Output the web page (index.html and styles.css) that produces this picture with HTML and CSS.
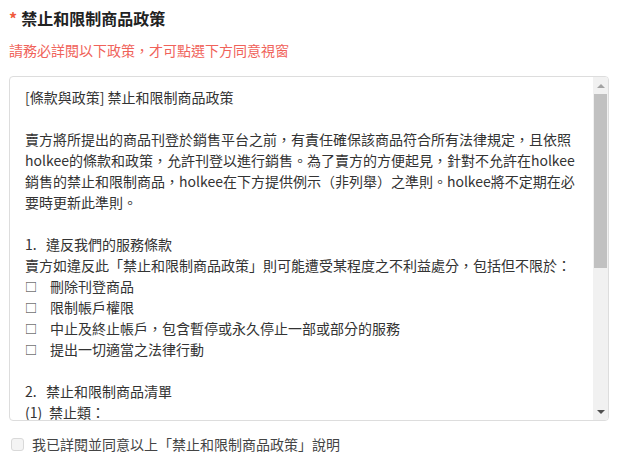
FILE: index.html
```html
<!DOCTYPE html>
<html lang="zh-Hant">
<head>
    <meta charset="UTF-8">
    <meta name="viewport" content="width=device-width, initial-scale=1.0">
    <title>禁止和限制商品政策</title>
    <link rel="stylesheet" href="styles.css">
</head>
<body>
    <div class="policy">
        <h2 class="policy-title"><span class="required">*</span>禁止和限制商品政策</h2>
        <p class="notice">請務必詳閱以下政策，才可點選下方同意視窗</p>
        <div class="terms">
            <div class="terms-text">
                <p>[條款與政策] 禁止和限制商品政策</p>
                <p class="blank"></p>
                <p>賣方將所提出的商品刊登於銷售平台之前，有責任確保該商品符合所有法律規定，且依照holkee的條款和政策，允許刊登以進行銷售。為了賣方的方便起見，針對不允許在holkee銷售的禁止和限制商品，holkee在下方提供例示（非列舉）之準則。holkee將不定期在必要時更新此準則。</p>
                <p class="blank"></p>
                <p><span class="num">1.</span>違反我們的服務條款</p>
                <p>賣方如違反此「禁止和限制商品政策」則可能遭受某程度之不利益處分，包括但不限於：</p>
                <p class="item"><span class="box">□</span>刪除刊登商品</p>
                <p class="item"><span class="box">□</span>限制帳戶權限</p>
                <p class="item"><span class="box">□</span>中止及終止帳戶，包含暫停或永久停止一部或部分的服務</p>
                <p class="item"><span class="box">□</span>提出一切適當之法律行動</p>
                <p class="blank"></p>
                <p><span class="num">2.</span>禁止和限制商品清單</p>
                <p><span class="num wide">(1)</span>禁止類：</p>
            </div>
            <div class="scrollbar">
                <span class="arrow up"></span>
                <div class="track">
                    <div class="thumb"></div>
                </div>
                <span class="arrow down"></span>
            </div>
        </div>
        <label class="agree">
            <input type="checkbox" class="agree-box">
            <span>我已詳閱並同意以上「禁止和限制商品政策」說明</span>
        </label>
    </div>
</body>
</html>
```

FILE: styles.css
```css
body {
    margin: 0;
    padding: 6px 9px;
    font-family: "Noto Sans CJK TC", "Noto Sans", sans-serif;
    color: #333;
    background: #fff;
}
.policy-title {
    margin: 0;
    font-size: 16px;
    line-height: 24px;
    font-weight: bold;
    color: #222;
}
.required {
    color: #f05a3c;
    margin-right: 4px;
}
.notice {
    margin: 8px 0 0;
    font-size: 14px;
    line-height: 24px;
    color: #f0625a;
}
.terms {
    display: flex;
    width: 600px;
    height: 345px;
    box-sizing: border-box;
    margin-top: 14px;
    border: 1px solid #ddd;
    border-radius: 4px;
    overflow: hidden;
}
.terms-text {
    flex: 1;
    overflow: hidden;
    padding: 10px 10px 0 15px;
    font-size: 14px;
    line-height: 21px;
    color: #333;
}
.terms-text p {
    margin: 0;
}
.terms-text .blank {
    height: 21px;
}
.num {
    display: inline-block;
    min-width: 21px;
}
.num.wide {
    min-width: 24px;
}
.item .box {
    display: inline-block;
    width: 25px;
    font-size: 12px;
}
.scrollbar {
    width: 15px;
    display: flex;
    flex-direction: column;
    background: #f1f1f1;
}
.arrow {
    height: 17px;
    display: flex;
    align-items: center;
    justify-content: center;
}
.arrow::before {
    content: "";
    border-left: 4px solid transparent;
    border-right: 4px solid transparent;
}
.arrow.up::before {
    border-bottom: 4px solid #a3a3a3;
}
.arrow.down::before {
    border-top: 4px solid #505050;
}
.track {
    flex: 1;
    padding: 0 1px;
}
.thumb {
    height: 174px;
    background: #c1c1c1;
}
.agree {
    display: flex;
    align-items: center;
    gap: 8px;
    margin-top: 13px;
    font-size: 14px;
    line-height: 20px;
    color: #444;
}
.agree-box {
    appearance: none;
    margin: 0 0 0 2px;
    width: 13px;
    height: 13px;
    border: 1px solid #d9d9d9;
    border-radius: 3px;
    background: #f4f4f4;
}
```
